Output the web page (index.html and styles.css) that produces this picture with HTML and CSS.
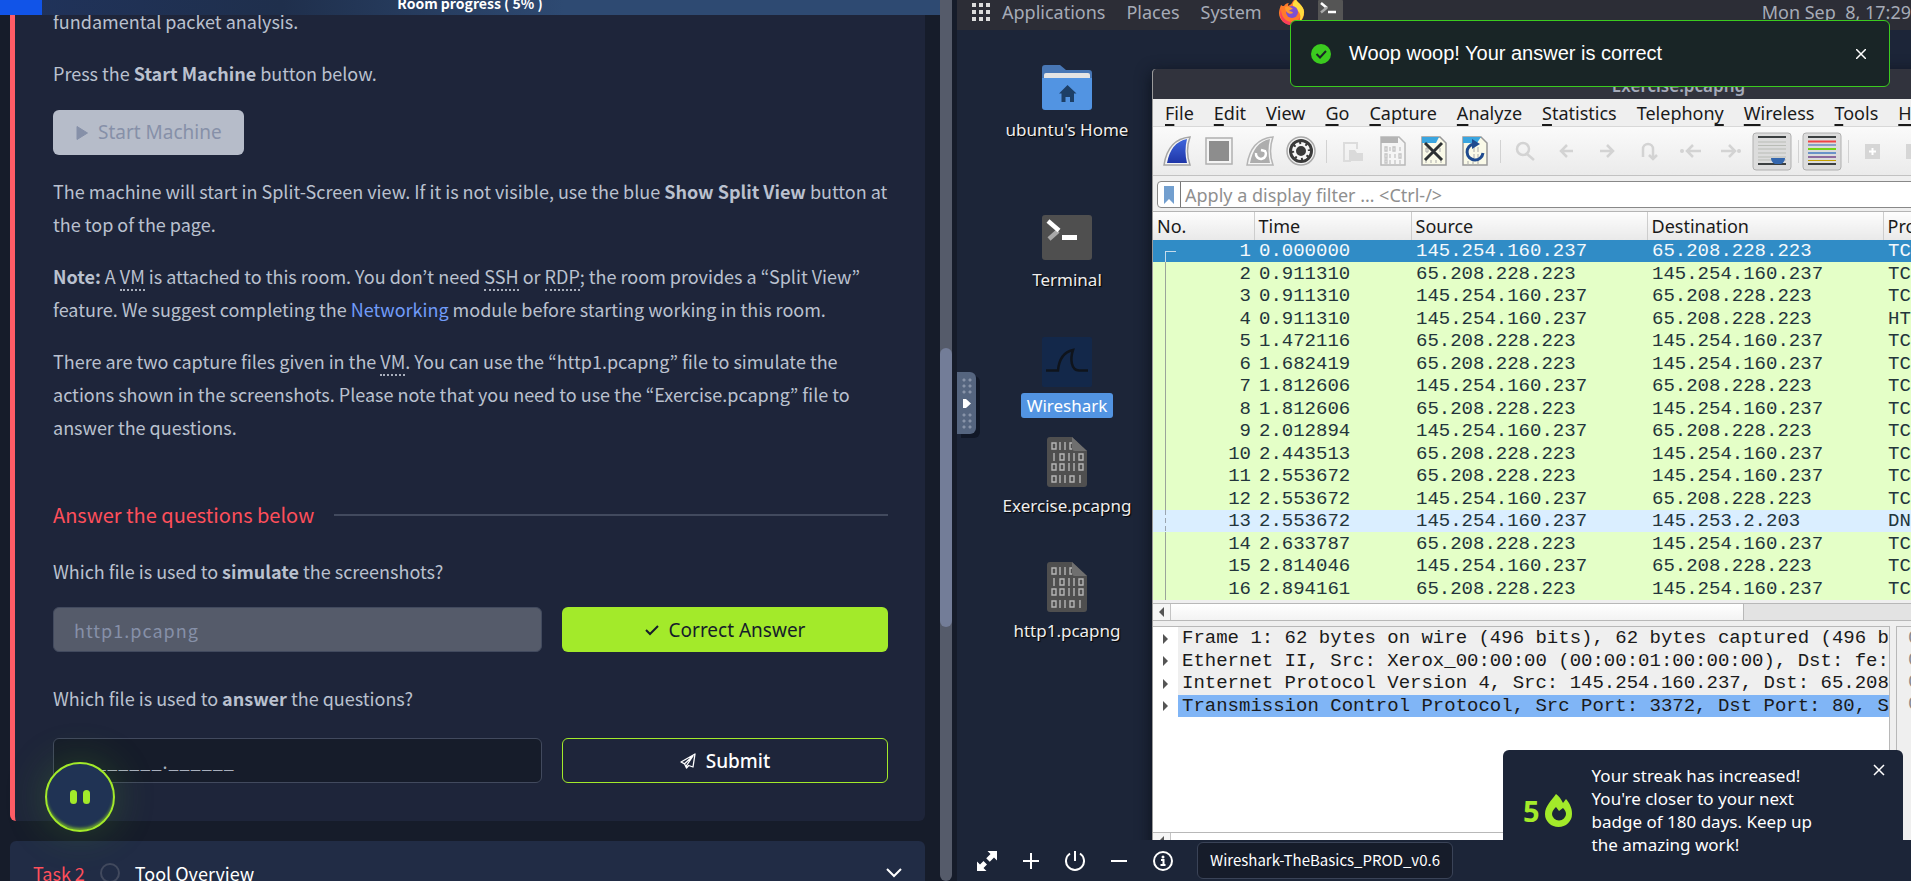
FILE: index.html
```
<!DOCTYPE html>
<html lang="en">
<head>
<meta charset="utf-8">
<title>Wireshark: The Basics</title>
<link rel="stylesheet" href="styles.css">
</head>
<body>
<div class="split">
  <main class="room">
    <div class="progress"><div class="progress-fill"></div><span class="progress-label">Room progress ( 5% )</span></div>
    <div class="scroller">
      <section class="task">
        <p>fundamental packet analysis.</p>
        <p>Press the <strong>Start Machine</strong> button below.</p>
        <button class="start" type="button" disabled>
          <svg width="12" height="14" viewBox="0 0 12 14"><path d="M1 0.500L11.500 7L1 13.500Z" fill="currentColor" stroke="currentColor" stroke-linejoin="round"/></svg>
          Start Machine</button>
        <p>The machine will start in Split-Screen view. If it is not visible, use the blue <strong>Show Split View</strong> button at the top of the page.</p>
        <p><strong>Note:</strong> A <abbr>VM</abbr> is attached to this room. You don’t need <abbr>SSH</abbr> or <abbr>RDP</abbr>; the room provides a “Split View” feature. We suggest completing the <a href="#networking">Networking</a> module before starting working in this room.</p>
        <p>There are two capture files given in the <abbr>VM</abbr>. You can use the “http1.pcapng” file to simulate the actions shown in the screenshots. Please note that you need to use the “Exercise.pcapng” file to answer the questions.</p>
        <h2 class="questions-title">Answer the questions below</h2>
        <form class="question">
          <label for="q1">Which file is used to <strong>simulate</strong> the screenshots?</label>
          <div class="answer">
            <input id="q1" class="field done" type="text" value="http1.pcapng" disabled>
            <button class="btn correct" type="button">
              <svg width="14" height="12" viewBox="0 0 14 12"><path d="M1 6l4 4L13 2" fill="none" stroke="currentColor" stroke-width="2"/></svg>
              Correct Answer</button>
          </div>
        </form>
        <form class="question second">
          <label for="q2">Which file is used to <strong>answer</strong> the questions?</label>
          <div class="answer">
            <input id="q2" class="field" type="text" placeholder="________.______">
            <button class="btn submit" type="button">
              <svg width="16" height="16" viewBox="0 0 16 16"><path d="M15 1L1 9l3.500 1.800L13 3L6.500 12.500V15l2.200-2.500L13 14L15 1ZM4.500 10.800L6.500 15" fill="none" stroke="currentColor" stroke-width="1.300" stroke-linejoin="round"/></svg>
              Submit</button>
          </div>
        </form>
      </section>
      <section class="next-task">
        <span class="task-no">Task 2</span><span class="task-ring"></span><span class="task-name">Tool Overview</span>
        <svg width="16" height="10" viewBox="0 0 16 10"><path d="M1 1l7 7l7-7" fill="none" stroke="#fff" stroke-width="2"/></svg>
      </section>
    </div>
    <button class="bot" type="button" aria-label="Assistant"><i></i><i></i></button>
  </main>
  <div class="scrollbar"><div class="thumb"></div></div>
  <div class="gutter"></div>
  <section class="machine">
    <div class="desktop">
      <header class="panel">
        <svg width="18" height="18" viewBox="0 0 18 18" fill="#dcdcdc"><path d="M0 0h4v4h-4zM7 0h4v4h-4zM14 0h4v4h-4zM0 7h4v4h-4zM7 7h4v4h-4zM14 7h4v4h-4zM0 14h4v4h-4zM7 14h4v4h-4zM14 14h4v4h-4z"/></svg>
        <span>Applications</span><span>Places</span><span>System</span>
        <svg class="firefox" width="26" height="26" viewBox="0 0 26 26"><path d="M2 6c1 1 2 1 3 1c1-2 3-3 5-3c-1 1-1 2-1 3c3-1 4-3 5-5c1-1 2-2 3-2c0 3 7 6 8 12c1 8-5 14-12 14S0 21 0 14c0-3 1-5 2-8Z" fill="#ff7a2a"/><path d="M14 4c1-2 2-3 3-4c0 3 8 6 8 13c0 4-2 8-5 10c2-4 2-8-1-11c-2-2-6-4-5-8Z" fill="#ffdc3e"/><path d="M2 10c0 8 5 13 11 13c4 0 7-2 8-5c0 5-4 8-9 8C5 26-1 19 2 10Z" fill="#fb3d5b"/><circle cx="13" cy="13" r="6" fill="#7c4fd3"/><path d="M6 8c3-1 6 0 8 2c-2 0-3 1-4 2c2 0 4 1 4 2c-3 2-8 0-8-6Z" fill="#ff9a2e"/></svg>
        <svg class="term" width="25" height="25" viewBox="0 0 25 25"><rect width="25" height="25" rx="1" fill="#555"/><path d="M3 3l6 5" stroke="#fff" stroke-width="2.500"/><path d="M9 7.500l-6 5" stroke="#aaa" stroke-width="2.500"/><path d="M10 12h8" stroke="#fff" stroke-width="2.500"/></svg>
        <time>Mon Sep&nbsp; 8, 17:29</time>
      </header>

      <figure class="icon home">
        <svg width="50" height="46" viewBox="0 0 50 46"><path d="M0 3q0-3 3-3h15l6 5h23q3 0 3 3v20H0z" fill="#4877b5"/><rect x="2" y="8" width="46" height="8" rx="2" fill="#e4e4e4"/><path d="M0 13h50v29q0 3-3 3H3q-3 0-3-3z" fill="#5294e2"/><path d="M25.500 20l9 8.500h-2.500V37h-4v-5h-4.500v5h-4v-8.500H17z" fill="#1d3f66"/></svg>
        <figcaption>ubuntu's Home</figcaption>
      </figure>
      <figure class="icon terminal">
        <svg width="50" height="46" viewBox="0 0 50 46"><rect width="50" height="45" rx="3" fill="#4f4f4f"/><path d="M16 16l-9 8" stroke="#a8a8a8" stroke-width="4.500"/><path d="M6 6l11 9.500" stroke="#fff" stroke-width="4.500"/><rect x="20" y="20" width="15" height="5" fill="#fff"/></svg>
        <figcaption>Terminal</figcaption>
      </figure>
      <figure class="icon shark">
        <svg width="50" height="50" viewBox="0 0 50 50"><rect width="50" height="50" rx="2" fill="#13284a"/><path d="M4 33.500h12C17 22 22 15 31 13c-3 9-2 20 6 20.500h9" fill="none" stroke="#0f141c" stroke-width="2.500"/></svg>
        <figcaption class="selected">Wireshark</figcaption>
      </figure>
      <figure class="icon exercise">
        <svg width="40" height="50" viewBox="0 0 40 50"><path d="M0 3q0-3 3-3h22l15 14v33q0 3-3 3H3q-3 0-3-3z" fill="#4f4f4f"/><path d="M25 0l15 14H28q-3 0-3-3z" fill="#6f6f6f"/><path d="M5 6h4v6h-4zM13 5v8M18 5v8M25 6h-2v6h2M7 16v8M13 17h4v6h-4zM22 16v8M27 16v8M32 17h4v6h-4zM5 27h4v6h-4zM13 27h4v6h-4zM22 26v8M27 26v8M32 27h4v6h-4zM5 39h4v6h-4zM13 38v8M18 38v8M23 39h4v6h-4zM33 38v8" fill="none" stroke="#b5b5b5" stroke-width="1.400"/></svg>
        <figcaption>Exercise.pcapng</figcaption>
      </figure>
      <figure class="icon http">
        <svg width="40" height="50" viewBox="0 0 40 50"><path d="M0 3q0-3 3-3h22l15 14v33q0 3-3 3H3q-3 0-3-3z" fill="#4f4f4f"/><path d="M25 0l15 14H28q-3 0-3-3z" fill="#6f6f6f"/><path d="M5 6h4v6h-4zM13 5v8M18 5v8M25 6h-2v6h2M7 16v8M13 17h4v6h-4zM22 16v8M27 16v8M32 17h4v6h-4zM5 27h4v6h-4zM13 27h4v6h-4zM22 26v8M27 26v8M32 27h4v6h-4zM5 39h4v6h-4zM13 38v8M18 38v8M23 39h4v6h-4zM33 38v8" fill="none" stroke="#b5b5b5" stroke-width="1.400"/></svg>
        <figcaption>http1.pcapng</figcaption>
      </figure>

      <button class="handle" type="button" aria-label="Open side bar"><span class="dots"></span>
        <svg width="8" height="9" viewBox="0 0 8 9"><path d="M0 0h3l5 4.500L3 9H0z" fill="#fff"/></svg>
        <span class="dots"></span></button>

      <article class="window">
        <div class="titlebar">Exercise.pcapng</div>
        <nav class="menu">
          <span><u>F</u>ile</span><span><u>E</u>dit</span><span><u>V</u>iew</span><span><u>G</u>o</span><span><u>C</u>apture</span><span><u>A</u>nalyze</span><span><u>S</u>tatistics</span><span>Telephon<u>y</u></span><span><u>W</u>ireless</span><span><u>T</u>ools</span><span><u>H</u>elp</span>
        </nav>
        <div class="toolbar">
          <svg class="tools" width="900" height="48" viewBox="0 0 900 48">
            <defs>
              <linearGradient id="blue" x1="0" y1="0" x2="0" y2="1"><stop offset="0" stop-color="#3f66dc"/><stop offset="1" stop-color="#1f36a8"/></linearGradient>
            </defs>
            <path d="M11 38Q15 12 37 10Q32 24 37 38Z" fill="#f4f4f4" stroke="#a5a5a5" stroke-width="1.500"/><path d="M14 36Q18 15 34 12Q31 24 34 36Z" fill="url(#blue)"/>
            <rect x="53" y="11" width="26" height="26" fill="#f4f4f4" stroke="#b0b0b0" stroke-width="1.500"/><rect x="56" y="14" width="20" height="20" fill="#8d8d8d"/>
            <path d="M94 38Q98 12 120 10Q115 24 120 38Z" fill="#f4f4f4" stroke="#b5b5b5" stroke-width="1.500"/><path d="M97 36Q101 15 117 12Q114 24 117 36Z" fill="#adadad"/><path d="M103 26a5 5 0 1 0 9-2l-4-1" fill="none" stroke="#fff" stroke-width="2.500"/>
            <circle cx="148" cy="24" r="14" fill="#f4f4f4" stroke="#aaa" stroke-width="1.500"/><circle cx="148" cy="24" r="12" fill="#3a3a3a"/><circle cx="148" cy="24" r="7.500" fill="none" stroke="#f6f6f6" stroke-width="3" stroke-dasharray="4 1.890"/><circle cx="148" cy="24" r="6" fill="none" stroke="#f6f6f6" stroke-width="2"/>
            <path d="M173.500 13v23M347.500 13v23M645.500 13v23M695.500 13v23" stroke="#d2d2d2"/>
            <path d="M198 34h-7V16h13v6" fill="none" stroke="#dcdcdc" stroke-width="2"/><path d="M196 23h6l2 3h6v8h-14z" fill="#dadada"/>
            <path d="M228 10h18l6 6v22h-24z" fill="#f5f5f5" stroke="#b8b8b8" stroke-width="1.500"/><path d="M228 10h17v6h-17z" fill="#b4b4b4"/>
            <path d="M232 20h2v4h-2zM237 20v4M240 20h2v4h-2zM247 20v4M232 27h2v4h-2zM237 27v4M242 27v4M246 27h2v4h-2zM232 33h2v3h-2zM237 33v4M242 33v4M247 33v4" fill="none" stroke="#c4c4c4" stroke-width="1.300"/>
            <path d="M269 10h18l6 6v22h-24z" fill="#fafae8" stroke="#999" stroke-width="1.500"/><path d="M269 10h17l-3 6h-14z" fill="#3aa5df"/><path d="M273 21h2v4h-2zM287 21v4M273 33v3M278 33v3M283 33v3M288 33v3" stroke="#aaa" fill="none"/><path d="M272 16l17 17M289 16L272 33" stroke="#2d3133" stroke-width="3"/>
            <path d="M310 10h18l6 6v22h-24z" fill="#fafae8" stroke="#999" stroke-width="1.500"/><path d="M310 10h18l-4 6h-14z" fill="#3aa5df"/><path d="M321 20v5M325 20v5M321 27v4M325 27v4M315 34v3M320 34v3M325 34v3" stroke="#aaa"/><path d="M321 17a8 8 0 1 0 9 9" fill="none" stroke="#1f4b8f" stroke-width="3"/><path d="M319 12l8 5l-8 5z" fill="#1f4b8f"/>
            <g fill="none" stroke="#d3d3d3" stroke-width="2.500"><circle cx="370" cy="22" r="6"/><path d="M374 27l7 6M420 24h-12M414 18l-6 6l6 6M447 24h12M454 18l6 6l-6 6M490 30V22a5 5 0 0 1 10 0v9M496 28l4 4l4-4M548 24h-13M540 18l-6 6l6 6M568 24h13M576 18l6 6l-6 6"/></g><g fill="#d3d3d3"><circle cx="529" cy="24" r="2"/><circle cx="586" cy="24" r="2"/></g>
            <rect x="600" y="6" width="38" height="37" rx="3" fill="#dcdcdc" stroke="#b0b0b0"/><path d="M605 10h28M605 37h28" stroke="#3b3f40" stroke-width="2"/><path d="M605 15h28M605 18.500h28M605 22h28M605 26h28M605 30h28M605 33h28" stroke="#b9bcb6"/><path d="M618 31h14q0 4-4 6h-6q-4-2-4-6z" fill="#3466ad"/>
            <rect x="650" y="6" width="38" height="37" rx="3" fill="#dcdcdc" stroke="#b0b0b0"/><path d="M655 10h28M655 37h28" stroke="#3b3f40" stroke-width="2"/><path d="M655 14.500h28" stroke="#ef4444" stroke-width="2"/><path d="M655 18h28" stroke="#3466ad"/><path d="M655 22h28" stroke="#73d216" stroke-width="2"/><path d="M655 26h28" stroke="#6a93c9" stroke-width="2"/><path d="M655 30h28" stroke="#8d6a9f" stroke-width="2"/><path d="M655 33.500h28" stroke="#c4a000"/>
            <rect x="712" y="17" width="15" height="15" fill="#d6d6d6"/><path d="M719.500 21v7M716 24.500h7" stroke="#fff" stroke-width="2"/><rect x="753" y="17" width="15" height="15" fill="#d6d6d6"/>
          </svg>
        </div>
        <div class="filterbar">
          <label class="filter"><svg width="10" height="18" viewBox="0 0 10 18"><path d="M0 0h10v18l-5-5l-5 5z" fill="#729fcf"/></svg><input type="text" aria-label="Display filter" placeholder="Apply a display filter … &lt;Ctrl-/&gt;"></label>
        </div>
        <div class="packets">
        <table>
          <colgroup><col class="c-no"><col class="c-time"><col class="c-addr"><col class="c-addr"><col></colgroup>
          <thead><tr><th>No.</th><th>Time</th><th>Source</th><th>Destination</th><th>Protocol</th></tr></thead>
          <tbody>
            <tr class="sel"><td>1</td><td>0.000000</td><td>145.254.160.237</td><td>65.208.228.223</td><td>TCP</td></tr>
            <tr><td>2</td><td>0.911310</td><td>65.208.228.223</td><td>145.254.160.237</td><td>TCP</td></tr>
            <tr><td>3</td><td>0.911310</td><td>145.254.160.237</td><td>65.208.228.223</td><td>TCP</td></tr>
            <tr><td>4</td><td>0.911310</td><td>145.254.160.237</td><td>65.208.228.223</td><td>HTTP</td></tr>
            <tr><td>5</td><td>1.472116</td><td>65.208.228.223</td><td>145.254.160.237</td><td>TCP</td></tr>
            <tr><td>6</td><td>1.682419</td><td>65.208.228.223</td><td>145.254.160.237</td><td>TCP</td></tr>
            <tr><td>7</td><td>1.812606</td><td>145.254.160.237</td><td>65.208.228.223</td><td>TCP</td></tr>
            <tr><td>8</td><td>1.812606</td><td>65.208.228.223</td><td>145.254.160.237</td><td>TCP</td></tr>
            <tr><td>9</td><td>2.012894</td><td>145.254.160.237</td><td>65.208.228.223</td><td>TCP</td></tr>
            <tr><td>10</td><td>2.443513</td><td>65.208.228.223</td><td>145.254.160.237</td><td>TCP</td></tr>
            <tr><td>11</td><td>2.553672</td><td>65.208.228.223</td><td>145.254.160.237</td><td>TCP</td></tr>
            <tr><td>12</td><td>2.553672</td><td>145.254.160.237</td><td>65.208.228.223</td><td>TCP</td></tr>
            <tr class="dns"><td>13</td><td>2.553672</td><td>145.254.160.237</td><td>145.253.2.203</td><td>DNS</td></tr>
            <tr><td>14</td><td>2.633787</td><td>65.208.228.223</td><td>145.254.160.237</td><td>TCP</td></tr>
            <tr><td>15</td><td>2.814046</td><td>145.254.160.237</td><td>65.208.228.223</td><td>TCP</td></tr>
            <tr><td>16</td><td>2.894161</td><td>65.208.228.223</td><td>145.254.160.237</td><td>TCP</td></tr>
          </tbody>
        </table>
        </div>
        <div class="hscroll"><span class="arrow"></span><span class="bar"></span></div>
        <div class="panes">
          <div class="details">
            <ul>
              <li><span>Frame 1: 62 bytes on wire (496 bits), 62 bytes captured (496 bits)</span></li>
              <li><span>Ethernet II, Src: Xerox_00:00:00 (00:00:01:00:00:00), Dst: fe:ff:20:00:01:00</span></li>
              <li><span>Internet Protocol Version 4, Src: 145.254.160.237, Dst: 65.208.228.223</span></li>
              <li class="current"><span>Transmission Control Protocol, Src Port: 3372, Dst Port: 80, Seq: 0</span></li>
            </ul>
            <div class="hscroll small"><span class="arrow"></span></div>
          </div>
          <div class="bytes"><div>0000</div><div>0010</div><div>0020</div><div>0030</div></div>
        </div>
      </article>
    </div>
    <footer class="controls">
      <button type="button" aria-label="Full screen"><svg width="20" height="20" viewBox="0 0 20 20"><path d="M10.500 0H20v9.500l-3-3l-4.500 4.500l-3.500-3.500L13.500 3zM0 10.500l3 3L6.500 10l3.500 3.500L6.500 17l3 3H0z" fill="#fff"/><path d="M8 12l4-4" stroke="#1c2538" stroke-width="2.500" transform="rotate(90 10 10)"/></svg></button>
      <button type="button" aria-label="Add"><svg width="20" height="20" viewBox="0 0 20 20"><path d="M10 2v16M2 10h16" stroke="#fff" stroke-width="2"/></svg></button>
      <button type="button" aria-label="Power"><svg width="20" height="20" viewBox="0 0 20 20"><path d="M5 2.500a9 9 0 1 0 10 0M10 0v10" fill="none" stroke="#fff" stroke-width="2"/></svg></button>
      <button type="button" aria-label="Remove"><svg width="20" height="20" viewBox="0 0 20 20"><path d="M2 10h16" stroke="#fff" stroke-width="2"/></svg></button>
      <button type="button" aria-label="Information"><svg width="20" height="20" viewBox="0 0 20 20"><circle cx="10" cy="10" r="9" fill="none" stroke="#fff" stroke-width="2"/><path d="M8 9h2.500v5M7.500 14h5" fill="none" stroke="#fff" stroke-width="2"/><circle cx="10" cy="6" r="1.500" fill="#fff"/></svg></button>
      <span class="machine-name">Wireshark-TheBasics_PROD_v0.6</span>
    </footer>
  </section>
</div>
<div class="toast" role="status">
  <svg width="20" height="20" viewBox="0 0 20 20"><circle cx="10" cy="10" r="10" fill="#3bcb1f"/><path d="M5.500 10l3.500 3.500l6-6.500" fill="none" stroke="#192526" stroke-width="2"/></svg>
  <span>Woop woop! Your answer is correct</span>
  <button type="button" aria-label="Close"><svg width="10" height="10" viewBox="0 0 10 10"><path d="M0 0l10 10M10 0L0 10" stroke="#fff" stroke-width="1.500"/></svg></button>
</div>
<div class="streak" role="status">
  <div class="count"><b>5</b><svg width="27" height="33" viewBox="0 0 27 33"><path d="M11 0C7 6 0 12 0 20a13.500 13 0 0 0 27 0c0-6-2-10-6-15l-3 4C16 5 14 2 11 0Z" fill="#a3ea2a"/><path d="M7 20c0-3 2-5 4-7l3 4l4-3c2 2 3 4 3 6a7 6.500 0 0 1-14 0Z" fill="#1c2538"/></svg></div>
  <p>Your streak has increased! You're closer to your next badge of 180 days. Keep up the amazing work!</p>
  <button type="button" aria-label="Dismiss"><svg width="12" height="12" viewBox="0 0 12 12"><path d="M1 1l10 10M11 1L1 11" stroke="#fff" stroke-width="1.500"/></svg></button>
</div>
</body>
</html>
```
FILE: styles.css
```
* { box-sizing: border-box; }
body { margin: 0; height: 100vh; overflow: hidden; background: #161c2a; font-family: "Noto Sans", "Open Sans", sans-serif; }
button { font: inherit; cursor: pointer; }
p, h2, figure, ul { margin: 0; padding: 0; }

.split { display: grid; grid-template-columns: 940fr 12px 5px 954fr; height: 100vh; }
.gutter { background: #161c2a; }
.scrollbar { background: #555b6a; border-radius: 0 0 6px 6px; padding-top: 348px; }
.thumb { height: 279px; border-radius: 6px; background: #737d98; }

/* Room column */
.room { position: relative; min-width: 0; height: 100vh; display: flex; flex-direction: column; overflow: hidden; font-family: "Noto Sans CJK KR", sans-serif; color: #bac1cf; }
.progress { flex: none; position: relative; z-index: 1; height: 15px; overflow: hidden; display: flex; justify-content: center; align-items: flex-end; background: linear-gradient(90deg, #20335c, #1f2f4c 30%, #2e4a72 60%); }
.progress-fill { position: absolute; left: 0; top: 0; width: 42px; height: 15px; background: #1154e8; }
.progress-label { color: #fff; font-size: 14px; font-weight: 700; line-height: 23px; }
.scroller { flex: 1; min-height: 0; overflow: hidden; padding: 0 15px 0 10px; }
.task { margin-top: -10px; border-left: 5px solid #ff5c66; border-radius: 0 0 6px 6px; background: #1e253a; padding: 0 37px 38px 38px; font-size: 18px; line-height: 33px; }
.task p { margin-bottom: 19px; }
abbr { border-bottom: 2px dotted #a9afbc; }
abbr, .task a { text-decoration: none; }
.task a { color: #719cf9; }
.start { display: flex; align-items: center; gap: 10px; height: 45px; margin: 20px 0; padding: 0 22px 0 23px; border: 0; border-radius: 6px; background: #b6bcc9; color: #8690a8; font-family: "Noto Sans", sans-serif; font-size: 19px; }
.questions-title { display: flex; align-items: center; gap: 20px; margin-top: 53px; color: #ff4f5b; font-size: 20px; font-weight: 400; line-height: 36px; }
.questions-title::after { content: ""; flex: 1; height: 2px; background: #424a5e; }
.question { margin-top: 22px; }
.question.second { margin-top: 30px; }
.question label { display: block; }
.answer { display: grid; grid-template-columns: 3fr 2fr; gap: 20px; margin-top: 19px; }
.second .answer { margin-top: 23px; }
.field, .btn { height: 45px; min-width: 0; border-radius: 6px; }
.field { padding: 0 20px; border: 1px solid #424a5e; background: #161c2a; color: #bac1cf; font-family: "Noto Sans CJK KR", sans-serif; font-size: 18px; letter-spacing: 1px; }
.field::placeholder { color: #a9b0be; opacity: 1; }
.field.done { background: #555b6a; color: #8690a8; }
.btn { display: flex; align-items: center; justify-content: center; gap: 10px; font-family: "Noto Sans", sans-serif; font-size: 19px; line-height: 26px; }
.correct { border: 0; background: #a3ea2a; color: #161c2a; }
.submit { border: 1px solid #a3ea2a; background: transparent; color: #fff; font-weight: 500; }
.next-task { display: flex; align-items: center; margin-top: 20px; height: 63px; padding: 0 23px; border-radius: 6px; background: #212c45; font-size: 18px; }
.task-no { color: #ff4f5b; }
.task-ring { width: 20px; height: 20px; margin: 0 15px; border: 2px solid #424a5e; border-radius: 50%; }
.task-name { flex: 1; color: #fff; }
.bot { position: absolute; left: 45px; bottom: 49px; width: 70px; height: 70px; display: flex; align-items: center; justify-content: center; gap: 6px; border: 2px solid #a3ea2a; border-radius: 50%; background: #203354; box-shadow: 0 0 40px rgba(80, 160, 40, .3), inset 0 -3px 3px -1px #6fa531; }
.bot i { width: 7px; height: 14px; border-radius: 4px; background: #a3ea2a; }

/* Remote machine */
.machine { min-width: 0; height: 100vh; display: flex; flex-direction: column; overflow: hidden; }
.desktop { position: relative; flex: 1; min-height: 0; overflow: hidden; background: #1c2538; }
.panel { display: flex; align-items: center; gap: 21px; height: 30px; padding: 0 0 6px 15px; background: #2c2d36; color: #a6abb7; font-size: 18px; line-height: 24px; white-space: nowrap; }
.panel > svg:first-child { margin-right: -9px; }
.panel .firefox { margin-left: -4px; }
.panel .term { margin-left: -8px; }
.panel time { margin-left: auto; }
.firefox, .term { flex: none; }
.icon { position: absolute; left: 25px; width: 170px; display: flex; flex-direction: column; align-items: center; gap: 6px; color: #eee; font-size: 17px; line-height: 25px; text-shadow: 1px 1px 1px #000; }
.home { top: 65px; }
.terminal { top: 215px; }
.shark { top: 337px; }
.exercise { top: 437px; }
.http { top: 562px; }
.selected { padding: 0 6px; border-radius: 3px; background: #5294e2; color: #fff; text-shadow: none; }
.handle { position: absolute; left: 0; top: 372px; width: 19px; height: 62px; display: flex; flex-direction: column; align-items: center; justify-content: center; gap: 5px; padding: 0; border: 0; border-radius: 0 6px 6px 0; background: #55657f; box-shadow: 4px 4px 0 #111827; }
.dots { width: 10px; height: 16px; background: radial-gradient(circle at 2px 2px, #8893a8 1px, transparent 2px) 0 0 / 6px 6px; }

.window { position: absolute; left: 195px; top: 69px; width: 1052px; height: 800px; display: flex; flex-direction: column; border-left: 1px solid #9a9a9a; border-radius: 4px 0 0 0; background: #efefef; box-shadow: 0 4px 16px #0b101a; color: #1a1a1a; font-size: 18px; overflow: hidden; }
.titlebar { flex: none; height: 30px; background: #31333d; color: #a4a9b8; font-size: 17px; font-weight: 600; line-height: 34px; text-align: center; }
.menu { flex: none; display: flex; gap: 20px; height: 28px; padding-left: 12px; border-bottom: 1px solid #d8d8d8; line-height: 28px; white-space: nowrap; }
.menu u { text-decoration-thickness: 2px; text-underline-offset: 4px; }
.toolbar { flex: none; height: 49px; overflow: hidden; border-bottom: 1px solid #c2c2c2; background: linear-gradient(#fafafa, #ebebeb); }
.filterbar { flex: none; height: 36px; padding: 5px 0 0 4px; border-bottom: 1px solid #b4b4b4; }
.filter { display: flex; align-items: center; height: 27px; border: 1px solid #888; border-radius: 4px; background: #fff; padding-left: 6px; }
.filter input { flex: 1; align-self: stretch; margin-left: 6px; padding: 0 4px; border: 0; border-left: 1px solid #777; background: transparent; font: 18px "Noto Sans", sans-serif; }
.filter input::placeholder { color: #8f8f8f; opacity: 1; }
.packets { flex: none; }
table { width: 100%; table-layout: fixed; border-collapse: collapse; }
.c-no { width: 101px; }
.c-time { width: 157px; }
.c-addr { width: 236px; }
th { height: 28px; padding: 0 4px; border-right: 1px solid #cdcdcd; background: linear-gradient(#fdfdfd, #e9e9e9); font-weight: 400; line-height: 24px; text-align: left; }
tbody { font-family: "Liberation Mono", monospace; font-size: 19px; color: #23353b; }
td { height: 22px; padding: 0 5px; line-height: 22px; background: #e4ffc7; white-space: nowrap; }
tbody tr:nth-child(2n) td { height: 23px; }
td:first-child { padding-right: 3px; text-align: right; background-image: linear-gradient(#9aa59a, #9aa59a); background-size: 1px 100%; background-position: 12px 0; background-repeat: no-repeat; }
.sel td { background-color: #308cc6; color: #f4f9fc; }
.sel td:first-child { background-image: linear-gradient(#c5dcec, #c5dcec), linear-gradient(#c5dcec, #c5dcec); background-size: 11px 1px, 1px 11px; background-position: 12px 11px, 12px 11px; }
.dns td { background-color: #daeeff; }
.dns td:first-child { background-image: repeating-linear-gradient(#9aa5b0 0 5px, transparent 5px 8px); }
.hscroll { flex: none; display: flex; height: 18px; margin-top: 3px; border: 1px solid #b8b8b8; border-width: 1px 0; background: #e3e3e3; }
.arrow { width: 18px; display: grid; place-items: center; border-right: 1px solid #c4c4c4; background: #f6f6f6; }
.arrow::before { content: ""; border: 5px solid transparent; border-right-color: #555; border-left: 0; }
.bar { width: 573px; border-right: 1px solid #b8b8b8; background: linear-gradient(#fff, #f3f3f3); }
.panes { flex: 1; min-height: 0; display: flex; gap: 6px; margin-top: 5px; font: 19px/22px "Liberation Mono", monospace; }
.details { width: 737px; overflow: hidden; display: flex; flex-direction: column; border: 1px solid #b8b8b8; border-left: 0; background: #fff; }
.details ul { height: 205px; list-style: none; display: flex; flex-direction: column; }
.details li { flex: none; height: 23px; display: flex; align-items: center; padding-left: 10px; white-space: nowrap; }
.details li:nth-child(2n) { height: 22px; }
.details li::before { content: ""; flex: none; border: 5px solid transparent; border-left-color: #555; border-right: 0; margin-right: 10px; }
.details li span { flex: none; align-self: stretch; padding-left: 4px; min-width: 712px; background: #efefef; }
.details .current span { background: #80b5f6; }
.details .hscroll { margin-top: 0; background: #fff; }
.bytes { flex: 1; padding-left: 11px; border: 1px solid #b8b8b8; color: #8a8a8a; }

.controls { flex: none; position: relative; height: 41px; display: flex; align-items: center; gap: 24px; padding: 0 20px; background: #1c2538; }
.controls button { display: flex; padding: 0; border: 0; background: none; }
.machine-name { height: 37px; padding: 0 12px; border: 1px solid #3a4357; border-radius: 6px; background: #161c2a; color: #fff; font: 15px/34px "Noto Sans CJK KR", sans-serif; white-space: nowrap; }

.toast { position: absolute; top: 20px; right: 21px; width: 600px; height: 67px; display: flex; align-items: center; gap: 18px; padding: 0 23px 0 20px; border: 1px solid #3bcb1f; border-radius: 6px; background: #192526; color: #fff; font: 20px "Liberation Sans", Arial, sans-serif; }
.toast span { flex: 1; }
.toast button, .streak button { display: flex; padding: 0; border: 0; background: none; }
.streak { position: absolute; right: 8px; bottom: 0; width: 400px; height: 131px; display: flex; padding: 14px 18px 0 20px; border-radius: 6px 6px 0 0; background: #1c2538; color: #fff; font-size: 17px; line-height: 23px; }
.count { display: flex; align-items: center; gap: 5px; height: 92px; color: #a3ea2a; font-size: 29px; }
.streak p { width: 228px; margin-left: 20px; }
.streak button { margin-left: auto; height: 12px; }
```
